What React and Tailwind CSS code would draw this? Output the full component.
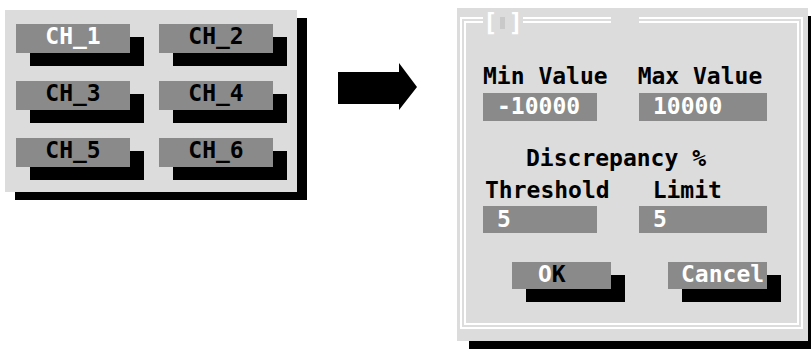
import React from "react";

const MONO = "font-['DejaVu_Sans_Mono',monospace] font-bold text-[23px] leading-[23px]";

const CHANNELS = [
  { id: "CH_1", active: true },
  { id: "CH_2" },
  { id: "CH_3" },
  { id: "CH_4" },
  { id: "CH_5" },
  { id: "CH_6" },
];

function ChannelButton({ label, active }) {
  return (
    <div
      className={`w-[114px] h-[29px] bg-[#8a8a8a] shadow-[14px_13px_0_#000] pt-[1px] text-center ${MONO} ${
        active ? "text-white" : "text-black"
      }`}
    >
      {label}
    </div>
  );
}

function Field({ value, width, height }) {
  return (
    <div
      className={`bg-[#8a8a8a] text-white pl-[14px] pt-[2px] ${MONO}`}
      style={{ width, height }}
    >
      {value}
    </div>
  );
}

function Arrow() {
  return (
    <svg width="79" height="47" viewBox="0 0 79 47">
      <polygon points="0,9 61,9 61,0 79,24 61,47 61,41 0,41" fill="#000" />
    </svg>
  );
}

export default function App() {
  return (
    <div className="w-[811px] h-[352px] overflow-hidden bg-white flex items-start pt-[8px]">
      {/* channel selector */}
      <div className="ml-[5px] mt-[2px] w-[292px] h-[182px] bg-[#dcdcdc] shadow-[10px_8px_0_#000] pl-[11px] pt-[14px]">
        <div className="grid grid-cols-[114px_114px] gap-x-[29px] gap-y-[28px]">
          {CHANNELS.map((c) => (
            <ChannelButton key={c.id} label={c.id} active={c.active} />
          ))}
        </div>
      </div>

      <div className="ml-[41px] mt-[55px]">
        <Arrow />
      </div>

      {/* limits dialog */}
      <div className="relative ml-[40px] w-[351px] h-[333px] shrink-0 bg-[#dcdcdc] shadow-[12px_8px_0_#000] pt-[9px] pl-[3px] pr-[5px] pb-[12px]">
        <div className="h-full border-[6px] border-double border-white pt-[42px]">
          <div className={`flex text-black ${MONO}`}>
            <span className="ml-[17px]">Min Value</span>
            <span className="ml-[30px]">Max Value</span>
          </div>
          <div className="flex mt-[5px]">
            <div className="ml-[17px]">
              <Field value="-10000" width={114} height={28} />
            </div>
            <div className="ml-[42px]">
              <Field value="10000" width={128} height={28} />
            </div>
          </div>

          <div className={`mt-[26px] ml-[60px] text-black ${MONO}`}>Discrepancy %</div>
          <div className={`flex mt-[9px] text-black ${MONO}`}>
            <span className="ml-[19px]">Threshold</span>
            <span className="ml-[43px]">Limit</span>
          </div>
          <div className="flex mt-[4px]">
            <div className="ml-[17px]">
              <Field value="5" width={114} height={27} />
            </div>
            <div className="ml-[42px]">
              <Field value="5" width={128} height={27} />
            </div>
          </div>

          <div className="flex mt-[29px]">
            <div className={`ml-[46px] w-[99px] h-[27px] bg-[#8a8a8a] shadow-[14px_13px_0_#000] pl-[26px] pt-[1px] ${MONO}`}>
              <span className="text-white">O</span>
              <span className="text-black">K</span>
            </div>
            <div className={`ml-[57px] w-[99px] h-[27px] bg-[#8a8a8a] shadow-[14px_13px_0_#000] pl-[13px] pt-[1px] text-white whitespace-nowrap ${MONO}`}>
              Cancel
            </div>
          </div>
        </div>

        {/* title over the frame */}
        <div className="absolute left-[26px] top-[3px] w-[40px] h-[24px] bg-[#dcdcdc] flex items-center font-['DejaVu_Sans_Mono',monospace] font-bold text-[24px] leading-none text-white">
          <span className="ml-[0px]">[</span>
          <span className="ml-[3px] w-[8px] h-[12px] bg-[#c9c9c9]" />
          <span className="ml-[4px]">]</span>
        </div>
        <div className="absolute left-[154px] top-[8px] w-[28px] h-[8px] bg-[#dcdcdc]" />
      </div>
    </div>
  );
}
